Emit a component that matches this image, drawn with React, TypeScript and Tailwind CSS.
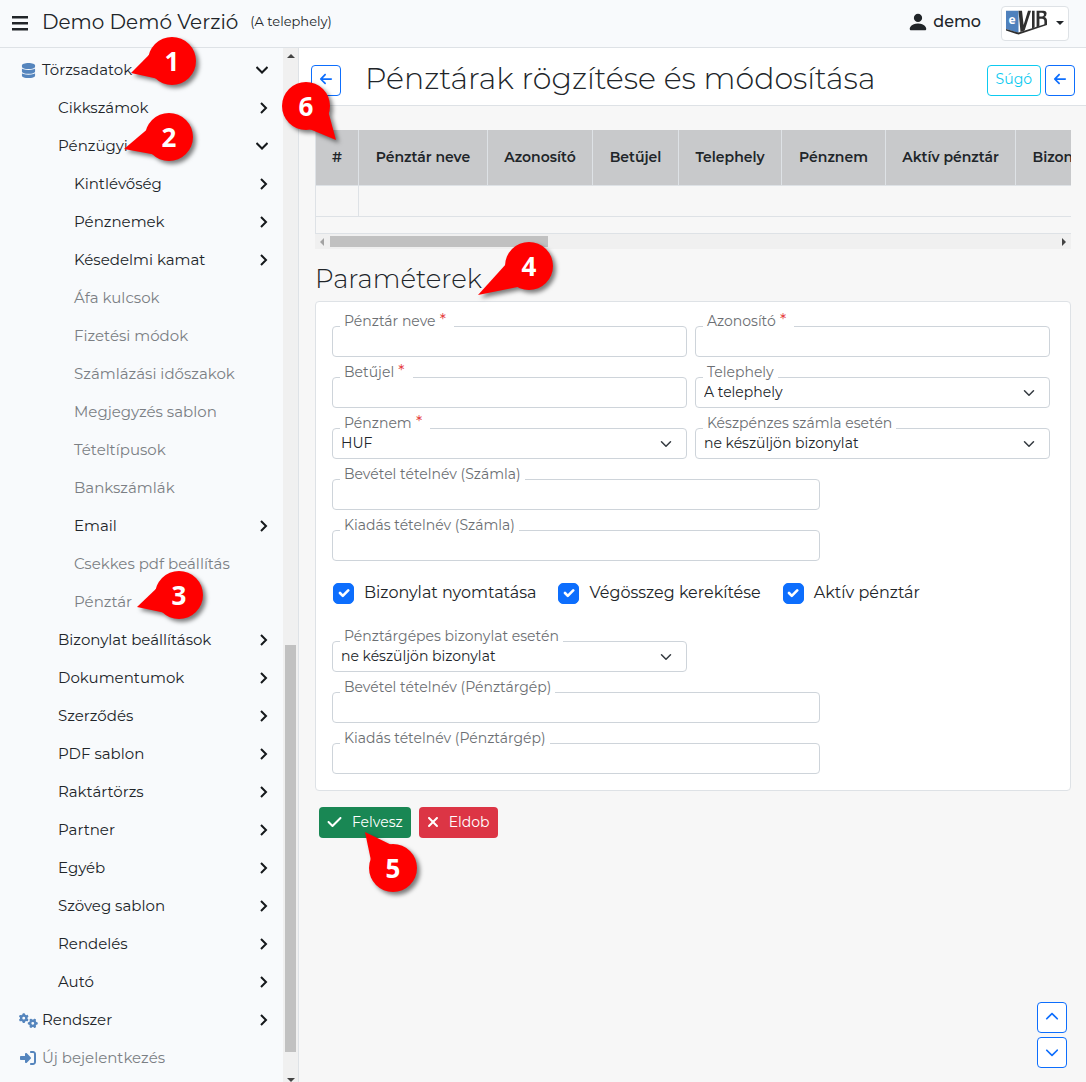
import { useState } from 'react';
import type { ReactNode } from 'react';
import { BsPersonFill } from 'react-icons/bs';
import {
  FaArrowLeft, FaCheck, FaChevronDown, FaChevronUp,
  FaDatabase, FaGears, FaRightToBracket, FaXmark,
} from 'react-icons/fa6';

type MenuItem = {
  label: string;
  level: number;
  state: 'open' | 'closed' | 'leaf';
  icon?: ReactNode;
};

const MENU: MenuItem[] = [
  { label: 'Törzsadatok', level: 0, state: 'open', icon: <FaDatabase size={15} /> },
  { label: 'Cikkszámok', level: 1, state: 'closed' },
  { label: 'Pénzügyi', level: 1, state: 'open' },
  { label: 'Kintlévőség', level: 2, state: 'closed' },
  { label: 'Pénznemek', level: 2, state: 'closed' },
  { label: 'Késedelmi kamat', level: 2, state: 'closed' },
  { label: 'Áfa kulcsok', level: 2, state: 'leaf' },
  { label: 'Fizetési módok', level: 2, state: 'leaf' },
  { label: 'Számlázási időszakok', level: 2, state: 'leaf' },
  { label: 'Megjegyzés sablon', level: 2, state: 'leaf' },
  { label: 'Tételtípusok', level: 2, state: 'leaf' },
  { label: 'Bankszámlák', level: 2, state: 'leaf' },
  { label: 'Email', level: 2, state: 'closed' },
  { label: 'Csekkes pdf beállítás', level: 2, state: 'leaf' },
  { label: 'Pénztár', level: 2, state: 'leaf' },
  { label: 'Bizonylat beállítások', level: 1, state: 'closed' },
  { label: 'Dokumentumok', level: 1, state: 'closed' },
  { label: 'Szerződés', level: 1, state: 'closed' },
  { label: 'PDF sablon', level: 1, state: 'closed' },
  { label: 'Raktártörzs', level: 1, state: 'closed' },
  { label: 'Partner', level: 1, state: 'closed' },
  { label: 'Egyéb', level: 1, state: 'closed' },
  { label: 'Szöveg sablon', level: 1, state: 'closed' },
  { label: 'Rendelés', level: 1, state: 'closed' },
  { label: 'Autó', level: 1, state: 'closed' },
  { label: 'Rendszer', level: 0, state: 'closed', icon: <FaGears size={19} /> },
  { label: 'Új bejelentkezés', level: 0, state: 'leaf', icon: <FaRightToBracket size={16} /> },
];

const INDENT = ['pl-[18px]', 'pl-[58px]', 'pl-[74px]'];

const COLUMNS = [
  { label: '#', width: 'w-[43px]' },
  { label: 'Pénztár neve', width: 'w-[129px]' },
  { label: 'Azonosító', width: 'w-[105px]' },
  { label: 'Betűjel', width: 'w-[86px]' },
  { label: 'Telephely', width: 'w-[103px]' },
  { label: 'Pénznem', width: 'w-[104px]' },
  { label: 'Aktív pénztár', width: 'w-[130px]' },
  { label: 'Bizonylat nyomtatása', width: 'w-[190px]' },
];

// Numbered markers; cx/cy is the centre of the disc, tipX/tipY the point relative to it
const CALLOUTS = [
  { n: 1, cx: 172, cy: 61, tipX: -41, tipY: 12 },
  { n: 2, cx: 169, cy: 137, tipX: -45, tipY: 12 },
  { n: 3, cx: 179, cy: 595, tipX: -42, tipY: 12 },
  { n: 4, cx: 529, cy: 266, tipX: -51, tipY: 29 },
  { n: 5, cx: 393, cy: 868, tipX: -28, tipY: -36 },
  { n: 6, cx: 306, cy: 106, tipX: 30, tipY: 34 },
];

function Logo() {
  return (
    <svg width="42" height="26" viewBox="0 0 42 26" aria-hidden="true">
      <path d="M0 0.7H12.5V23L0 19Z" fill="#4f81bd" />
      <text x="2.5" y="14" fontFamily="Open Sans, sans-serif" fontWeight="700" fontSize="12" fill="#fff">e</text>
      <path d="M0 19L12.5 22.6L41 13.5V15L12.5 24.6L0 20.6Z" fill="#2f2f2f" />
      <path d="M12.5 0.7H16L17.6 15L22 0.7H25L18.6 20.5L14.5 22Z" fill="#2f2f2f" />
      <path d="M26 0.7H28.6V17.6L26 18.5Z" fill="#2f2f2f" />
      <path
        d="M30.6 0.7H37.5Q40.6 0.7 40.6 3.6Q40.6 6.4 38.4 7Q41 7.8 41 11V14.4L38.4 15.2V11.4Q38.4 8.8 36 8.8L33.4 8.8V16.4L30.6 17.2ZM33.4 2.8V6.6H36Q38 6.6 38 4.6Q38 2.8 36 2.8Z"
        fill="#2f2f2f"
        fillRule="evenodd"
      />
    </svg>
  );
}

function Callout({ n, cx, cy, tipX, tipY }: (typeof CALLOUTS)[number]) {
  const len = Math.hypot(tipX, tipY);
  const px = (-tipY / len) * 13;
  const py = (tipX / len) * 13;
  const bx = (tipX / len) * 19;
  const by = (tipY / len) * 19;
  return (
    <div
      className="pointer-events-none absolute z-20 flex size-12 items-center justify-center"
      style={{ left: cx - 24, top: cy - 24 }}
    >
      <svg
        className="absolute inset-0 overflow-visible drop-shadow-[3px_3px_2px_rgba(0,0,0,0.5)]"
        width="48"
        height="48"
        viewBox="-24 -24 48 48"
        aria-hidden="true"
      >
        <circle r="24" fill="#f00" />
        <path d={`M${bx + px} ${by + py}L${tipX} ${tipY}L${bx - px} ${by - py}Z`} fill="#f00" />
      </svg>
      <span className="relative font-['Open_Sans',sans-serif] text-[26px] leading-none font-bold text-white">{n}</span>
    </div>
  );
}

function MenuArrow({ open }: { open: boolean }) {
  return (
    <svg width="12" height="12" viewBox="0 0 12 12" fill="none" stroke="#15181b" strokeWidth="2" aria-hidden="true">
      <path d={open ? 'M0.5 3L6 8.5L11.5 3' : 'M5 1L10 6L5 11'} />
    </svg>
  );
}

function Sidebar() {
  return (
    <aside className="flex w-[299px] shrink-0 overflow-hidden border-r border-[#dee2e6] bg-[#f8fafc]">
      <nav className="min-w-0 flex-1 pt-[3px]">
        {MENU.map((item) => (
          <a
            key={item.label}
            href="#"
            className={`flex h-[38px] items-center pr-[15px] text-[15px] ${INDENT[item.level]} ${item.state === 'leaf' ? 'text-[#7b7f84]' : 'text-[#212529]'}`}
          >
            {item.icon && <span className="mr-1 flex w-5 justify-center text-[#5585bd]">{item.icon}</span>}
            <span className="flex-1 whitespace-nowrap">{item.label}</span>
            {item.state !== 'leaf' && <MenuArrow open={item.state === 'open'} />}
          </a>
        ))}
      </nav>
      {/* Scrollbar */}
      <div className="flex w-[15px] flex-col items-center bg-[#f0f0f0]">
        <svg className="h-[15px] w-2 shrink-0" viewBox="0 0 8 15"><path d="M0 10L4 6L8 10Z" fill="#444" /></svg>
        <div className="flex w-[11px] flex-1 flex-col">
          <div className="grow-[582]" />
          <div className="grow-[407] bg-[#c1c1c1]" />
          <div className="grow-[17]" />
        </div>
        <svg className="h-[13px] w-2 shrink-0" viewBox="0 0 8 13"><path d="M0 9L4 13L8 9Z" fill="#444" /></svg>
      </div>
    </aside>
  );
}

function IconButton({ label, children }: { label: string; children: ReactNode }) {
  return (
    <button
      aria-label={label}
      className="flex h-[31px] w-[30px] shrink-0 items-center justify-center rounded border border-[#0d6efd] bg-white pb-0.5 text-[#0d6efd]"
    >
      {children}
    </button>
  );
}

function FieldLabel({ id, label, required }: { id: string; label: string; required?: boolean }) {
  return (
    <label
      htmlFor={id}
      className={`relative z-10 ml-2 -mb-1 self-start bg-white pt-0.5 pl-1 text-sm leading-[18px] text-[#6c6f73] ${required ? 'pr-2' : 'pr-1'}`}
    >
      {label}
      {required && <span className="text-base leading-none text-[#e53e3e]"> *</span>}
    </label>
  );
}

function TextField({ id, label, required, className = '' }: { id: string; label: string; required?: boolean; className?: string }) {
  return (
    <div className={`flex flex-col ${className}`}>
      <FieldLabel id={id} label={label} required={required} />
      <input id={id} type="text" className="h-[31px] rounded-sm border border-[#ced4da] bg-white px-2 text-sm text-[#212529] outline-none focus:border-[#86b7fe]" />
    </div>
  );
}

function SelectField({ id, label, value, required, className = '' }: { id: string; label: string; value: string; required?: boolean; className?: string }) {
  return (
    <div className={`flex flex-col ${className}`}>
      <FieldLabel id={id} label={label} required={required} />
      <div className="grid">
        <select id={id} className="col-start-1 row-start-1 h-[31px] appearance-none rounded-sm border border-[#ced4da] bg-white pr-9 pb-0.5 pl-2 text-sm text-[#212529] outline-none">
          <option>{value}</option>
        </select>
        <svg
          className="pointer-events-none col-start-1 row-start-1 mr-[15px] size-3 self-center justify-self-end"
          viewBox="0 0 16 16"
          fill="none"
          stroke="#343a40"
          strokeWidth="2"
          strokeLinecap="round"
          strokeLinejoin="round"
        >
          <path d="m2 5 6 6 6-6" />
        </svg>
      </div>
    </div>
  );
}

function CheckField({ label }: { label: string }) {
  const [checked, setChecked] = useState(true);
  return (
    <label className="flex items-center gap-2.5 text-base text-[#212529]">
      <span className="grid place-items-center">
        <input
          type="checkbox"
          checked={checked}
          onChange={(e) => setChecked(e.target.checked)}
          className="col-start-1 row-start-1 size-[21px] appearance-none rounded-[5px] border border-[#0d6efd] bg-white checked:bg-[#0d6efd]"
        />
        {checked && (
          <svg
            className="pointer-events-none col-start-1 row-start-1 size-3"
            viewBox="0 0 12 12"
            fill="none"
            stroke="#fff"
            strokeWidth="2.6"
            strokeLinecap="round"
            strokeLinejoin="round"
          >
            <path d="M2 6L4.8 8.8L10.2 3.4" />
          </svg>
        )}
      </span>
      {label}
    </label>
  );
}

export default function App() {
  return (
    <div className="relative flex h-screen flex-col overflow-hidden bg-[#f7f7f7] font-[Montserrat,Inter,sans-serif] text-[#212529]">
      <header className="flex h-12 shrink-0 items-center border-b border-[#dee2e6] bg-[#f8fafc] pr-[17px] pb-px pl-3">
        <button aria-label="Menü">
          <svg width="16" height="15" viewBox="0 0 16 15" fill="#212529"><path d="M0 0H16V2.4H0ZM0 6H16V8.4H0ZM0 12H16V14.4H0Z" /></svg>
        </button>
        <span className="ml-3.5 pb-0.5 text-xl leading-7">Demo Demó Verzió</span>
        <span className="ml-3 pb-0.5 text-[13px]">(A telephely)</span>
        <a href="#" className="ml-auto flex items-center gap-1 pb-0.5 text-base font-medium">
          <BsPersonFill size={22} />
          demo
        </a>
        <button aria-label="eVIR" className="ml-5 flex h-[35px] items-center gap-2 rounded border border-[#dee2e6] bg-white px-1">
          <Logo />
          <svg width="8" height="4" viewBox="0 0 8 4"><path d="M0 0H8L4 4Z" fill="#212529" /></svg>
        </button>
      </header>

      <div className="flex min-h-0 flex-1">
        <Sidebar />

        <main className="min-w-0 flex-1">
          <div className="flex items-center border-b border-[#dee2e6] bg-white pt-4 pr-[11px] pb-[9px] pl-3">
            <IconButton label="Vissza"><FaArrowLeft size={14} /></IconButton>
            <h1 className="ml-6 flex-1 pb-0.5 text-[30px] leading-[30px] font-light whitespace-nowrap">Pénztárak rögzítése és módosítása</h1>
            <button className="mr-1 h-[31px] rounded border border-[#0dcaf0] px-2 pb-0.5 text-sm text-[#0dcaf0]">Súgó</button>
            <IconButton label="Vissza a listához"><FaArrowLeft size={14} /></IconButton>
          </div>

          <div className="mt-6 mr-[15px] ml-4">
            {/* Cash desk list */}
            <div className="overflow-hidden border-b border-l border-[#dee2e6] pb-4">
              <table className="w-[890px] table-fixed border-separate border-spacing-0 text-sm">
                <thead>
                  <tr>
                    {COLUMNS.map((c) => (
                      <th key={c.label} className={`h-14 border-r border-b border-[#dee2e6] bg-[#c8c9cb] p-0 pb-0.5 text-center font-semibold whitespace-nowrap ${c.width}`}>
                        {c.label}
                      </th>
                    ))}
                  </tr>
                </thead>
                <tbody>
                  <tr>
                    <td className="h-[31px] border-r border-b border-[#dee2e6]" />
                    <td colSpan={7} className="border-b border-[#dee2e6]" />
                  </tr>
                </tbody>
              </table>
            </div>
            <div className="flex h-[15px] items-center bg-[#f0f0f0]">
              <svg className="w-[15px] shrink-0" height="8" viewBox="0 0 15 8"><path d="M9 0L5 4L9 8Z" fill="#a3a3a3" /></svg>
              <div className="flex h-[11px] flex-1">
                <div className="w-[30%] bg-[#c1c1c1]" />
              </div>
              <svg className="w-[15px] shrink-0" height="8" viewBox="0 0 15 8"><path d="M6 0L10 4L6 8Z" fill="#444" /></svg>
            </div>

            {/* Parameters */}
            <h2 className="mt-3.5 mb-1.5 text-[26px] leading-8 font-light">Paraméterek</h2>
            <form onSubmit={(e) => e.preventDefault()}>
              <div className="flex flex-col gap-1 rounded border border-[#dee2e6] bg-white pt-2 pr-5 pb-4 pl-4">
                <div className="grid grid-cols-2 gap-x-2 gap-y-1">
                  <TextField id="name" label="Pénztár neve" required />
                  <TextField id="code" label="Azonosító" required />
                  <TextField id="letter" label="Betűjel" required />
                  <SelectField id="site" label="Telephely" value="A telephely" />
                  <SelectField id="currency" label="Pénznem" value="HUF" required />
                  <SelectField id="cashInvoice" label="Készpénzes számla esetén" value="ne készüljön bizonylat" />
                </div>
                <TextField id="incomeInvoice" label="Bevétel tételnév (Számla)" className="w-[68%]" />
                <TextField id="expenseInvoice" label="Kiadás tételnév (Számla)" className="w-[68%]" />
                <div className="flex h-14 items-center gap-[22px] pl-px">
                  <CheckField label="Bizonylat nyomtatása" />
                  <CheckField label="Végösszeg kerekítése" />
                  <CheckField label="Aktív pénztár" />
                </div>
                <div className="grid grid-cols-2 gap-x-2">
                  <SelectField id="registerReceipt" label="Pénztárgépes bizonylat esetén" value="ne készüljön bizonylat" />
                </div>
                <TextField id="incomeRegister" label="Bevétel tételnév (Pénztárgép)" className="w-[68%]" />
                <TextField id="expenseRegister" label="Kiadás tételnév (Pénztárgép)" className="w-[68%]" />
              </div>
              <div className="mt-4 ml-1 flex gap-2 text-sm text-white">
                <button type="submit" className="flex h-[31px] items-center gap-2.5 rounded-sm bg-[#198754] px-2 pb-0.5">
                  <FaCheck className="h-4 w-[15px]" />
                  Felvesz
                </button>
                <button type="reset" className="flex h-[31px] items-center gap-2.5 rounded-sm bg-[#dc3545] px-2 pb-0.5">
                  <FaXmark className="h-4 w-3" />
                  Eldob
                </button>
              </div>
            </form>
          </div>
        </main>
      </div>

      {/* Jump buttons */}
      <div className="absolute right-[19px] bottom-3.5 flex flex-col gap-1">
        <IconButton label="Fel"><FaChevronUp size={14} /></IconButton>
        <IconButton label="Le"><FaChevronDown size={14} /></IconButton>
      </div>

      {CALLOUTS.map((c) => <Callout key={c.n} {...c} />)}
    </div>
  );
}
